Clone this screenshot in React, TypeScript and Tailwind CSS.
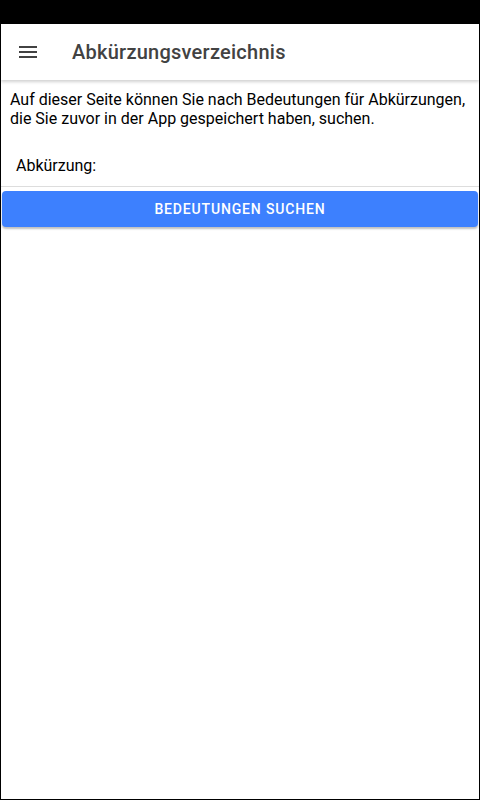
export default function App() {
  return (
    <div className="flex h-[800px] w-[480px] flex-col bg-black font-['Roboto',sans-serif]">
      <div className="h-6 shrink-0" />
      <div className="flex flex-1 flex-col border-x border-b border-black bg-white">
        <header className="relative z-10 flex h-14 shrink-0 items-center bg-white shadow-[0_2px_3px_rgba(0,0,0,0.18)]">
          <button className="ml-[15px] flex h-6 w-6 items-center justify-center text-[#424242]">
            <svg width="24" height="24" viewBox="0 0 24 24" fill="currentColor">
              <path d="M3 18h18v-2H3v2zm0-5h18v-2H3v2zm0-7v2h18V6H3z" />
            </svg>
          </button>
          <h1 className="ml-[32px] text-[20px] font-medium tracking-[0.25px] text-[#424242]">Abkürzungsverzeichnis</h1>
        </header>

        <p className="px-[9px] pt-[10px] text-[16px] leading-[19px] text-black">
          Auf dieser Seite können Sie nach Bedeutungen für Abkürzungen, die Sie zuvor in der App gespeichert haben, suchen.
        </p>

        <div className="mt-[18px] flex h-[41px] items-center border-b border-[#dddddd] px-[15px]">
          <label className="text-[16px] text-black">Abkürzung:</label>
        </div>

        <div className="px-px pt-[4px]">
          <button className="h-[36px] w-full rounded-[4px] bg-[#3d80fe] text-[14px] font-medium tracking-[0.06em] text-white shadow-[0_2px_2px_rgba(0,0,0,0.25)]">
            BEDEUTUNGEN SUCHEN
          </button>
        </div>
      </div>
    </div>
  );
}
